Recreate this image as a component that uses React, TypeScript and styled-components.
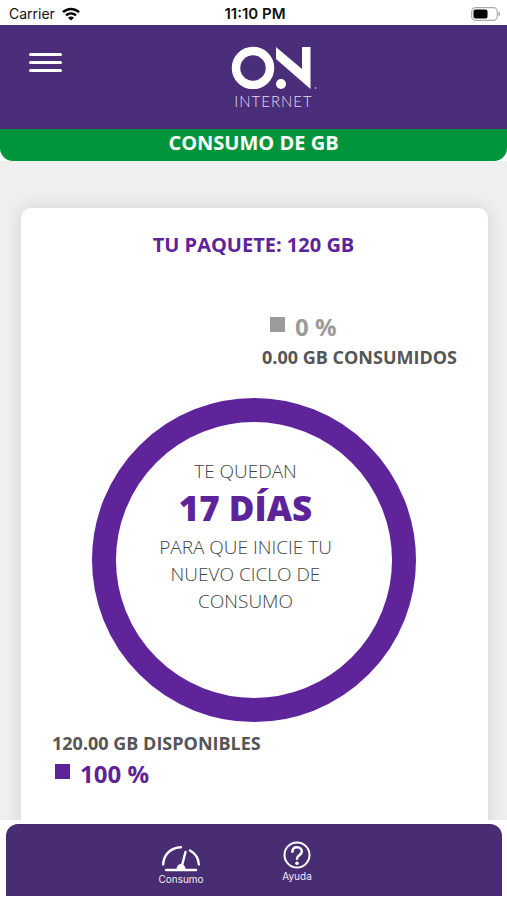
import React from "react";
import styled, { createGlobalStyle } from "styled-components";

const GlobalStyle = createGlobalStyle`
  *, *::before, *::after { box-sizing: border-box; }
  body { margin: 0; background: #fff; font-family: "Open Sans", "Noto Sans", sans-serif; }
  h1, h2, p { margin: 0; }
`;

const Screen = styled.div`
  display: flex;
  flex-direction: column;
  height: 100vh;
  overflow: hidden;
`;

const StatusBar = styled.div`
  flex: none;
  display: grid;
  grid-template-columns: 1fr auto 1fr;
  align-items: center;
  height: 25px;
  padding: 2px 6px 0 9px;
  font-family: Inter, sans-serif;
  font-size: 14px;
  line-height: 20px;
  color: #111;
`;

const Carrier = styled.span`
  display: flex;
  align-items: center;
  gap: 7px;
`;

const Clock = styled.time`
  font-size: 15px;
  font-weight: 600;
`;

const BatteryIcon = styled.svg`
  justify-self: end;
`;

const Header = styled.header`
  flex: none;
  display: grid;
  grid-template-columns: 1fr auto 1fr;
  height: 104px;
  padding: 0 29px;
  background: #4b2e79;
`;

const MenuButton = styled.button`
  justify-self: start;
  align-self: start;
  display: flex;
  flex-direction: column;
  gap: 5px;
  width: 33px;
  margin-top: 28px;
  padding: 0;
  border: 0;
  background: none;
  cursor: pointer;
`;

const MenuLine = styled.span`
  height: 3px;
  border-radius: 2px;
  background: #fff;
`;

const Brand = styled.a`
  display: flex;
  flex-direction: column;
  align-items: center;
  width: 86px;
  margin-left: 40px;
  padding-top: 20px;
  color: #fff;
  text-decoration: none;
`;

const BrandName = styled.span`
  font-family: Lato, sans-serif;
  font-size: 15px;
  font-weight: 300;
  line-height: 24px;
  letter-spacing: 1px;
  color: #e4dcf0;
`;

const Banner = styled.h1`
  height: 32px;
  border-radius: 0 0 13px 13px;
  background: #00953b;
  color: #fff;
  font-size: 20px;
  font-weight: 700;
  line-height: 28px;
  text-align: center;
`;

const BannerStrip = styled.div`
  flex: none;
  background: #fff;
`;

const Content = styled.main`
  flex: 1;
  min-height: 0;
  overflow: hidden;
  padding: 47px 19px 0 21px;
  background: #efefef;
`;

const Card = styled.section`
  display: flex;
  flex-direction: column;
  padding: 22px 31px 80px;
  border-radius: 10px;
  background: #fff;
  box-shadow: 0 0 18px rgba(0, 0, 0, 0.12);
`;

const PlanTitle = styled.h2`
  padding-right: 2px;
  color: #5d2499;
  font-size: 20px;
  font-weight: 700;
  line-height: 30px;
  text-align: center;
`;

const Usage = styled.div<{ $end?: boolean }>`
  display: flex;
  flex-direction: column;
  align-self: ${(p) => (p.$end ? "flex-end" : "flex-start")};
  margin-top: ${(p) => (p.$end ? "51px" : "6px")};
`;

const Percent = styled.p<{ $color: string; $inset: string }>`
  display: flex;
  align-items: center;
  gap: 10px;
  padding-left: ${(p) => p.$inset};
  color: ${(p) => p.$color};
  font-size: 24px;
  font-weight: 700;
  line-height: 31px;
`;

const Swatch = styled.span`
  width: 15px;
  height: 15px;
  margin-bottom: 5px;
  background: currentColor;
`;

const Amount = styled.p`
  color: #555;
  font-size: 18px;
  font-weight: 700;
  line-height: 30px;
`;

const Gauge = styled.div`
  display: grid;
  align-self: center;
  width: 80%;
  max-width: 324px;
  margin: 26px 2px 0 0;
  > * { grid-area: 1 / 1; }
`;

const Remaining = styled.div`
  display: flex;
  flex-direction: column;
  align-items: center;
  width: 190px;
  margin: 60px 0 0 59px;
  color: #444;
  font-size: 19px;
  font-weight: 300;
  line-height: 27px;
  text-align: center;
`;

const Days = styled.strong`
  padding: 2px 0 5px;
  color: #5d2499;
  font-size: 35px;
  font-weight: 800;
  line-height: 42px;
`;

const TabBar = styled.nav`
  flex: none;
  display: flex;
  justify-content: center;
  gap: 56px;
  height: 72px;
  margin: 4px 5px 4px 6px;
  padding: 17px 30px 0 0;
  border-radius: 12px 12px 0 0;
  background: #482d73;
`;

const Tab = styled.a<{ $low?: boolean }>`
  display: flex;
  flex-direction: column;
  align-items: center;
  width: 60px;
  padding-top: ${(p) => (p.$low ? "5px" : "0")};
  color: #f1eaf8;
  font-family: Inter, sans-serif;
  font-size: 10px;
  line-height: 14px;
  text-decoration: none;
`;

function WifiIcon() {
  return (
    <svg width="18" height="14" viewBox="0 0 18 14" fill="none" stroke="#000" strokeWidth="2.5" aria-hidden="true">
      <path d="M1 5.2C5.6.8 12.4.8 17 5.2" />
      <path d="M4 8.4C6.9 5.7 11.1 5.7 14 8.4" />
      <path d="M9 13.6 6 10.7C7.7 9.1 10.3 9.1 12 10.7Z" fill="#000" stroke="none" />
    </svg>
  );
}

function Logo() {
  return (
    <svg width="86" height="44" viewBox="0 0 86 44" fill="#fff" aria-hidden="true">
      <circle cx="22" cy="23" r="17" fill="none" stroke="#fff" strokeWidth="8.5" />
      <circle cx="50" cy="39" r="5" />
      <path d="M45 2 71 24V2H79.5v42L45 14Z" />
      <circle cx="84.5" cy="43" r="0.7" />
    </svg>
  );
}

function SpeedIcon() {
  return (
    <svg width="38" height="26" viewBox="0 0 38 26" fill="none" stroke="#fff" strokeWidth="2.4" strokeLinecap="round" aria-hidden="true">
      <path d="M1.2 18.5C1.5 8.5 9 1.5 19 1.2" />
      <path d="M28 4.5C33.5 7.5 36.5 12.5 36.8 18.5" />
      <path d="M4 24H34" />
      <path d="M23.5 6 20 19.5" />
      <path d="M14.5 24c0-3.5 1.8-6 4.5-6s4.5 2.5 4.5 6Z" fill="#fff" stroke="none" />
    </svg>
  );
}

function HelpIcon() {
  return (
    <svg width="28" height="28" viewBox="0 0 28 28" fill="none" stroke="#fff" strokeLinecap="round" aria-hidden="true">
      <circle cx="14" cy="14" r="12.5" strokeWidth="2" />
      <path d="M9.4 10.8C9.4 8 11.3 6.2 14 6.2s4.8 1.8 4.8 4.4c0 3.8-4.8 3.3-4.8 7.2" strokeWidth="2.5" />
      <circle cx="14" cy="22.2" r="1.8" fill="#fff" stroke="none" />
    </svg>
  );
}

export default function App() {
  return (
    <Screen>
      <GlobalStyle />
      <StatusBar>
        <Carrier>
          Carrier
          <WifiIcon />
        </Carrier>
        <Clock>11:10 PM</Clock>
        <BatteryIcon width="30" height="14" viewBox="0 0 30 14" role="img" aria-label="Batería">
          <rect x="0.7" y="0.7" width="25.6" height="12.6" rx="3.8" fill="#fff" stroke="#aaa" strokeWidth="1.2" />
          <rect x="2.5" y="2.5" width="14" height="9" rx="2" />
          <path d="M27.5 4.5v5c2.2-1 2.2-4 0-5Z" fill="#aaa" />
        </BatteryIcon>
      </StatusBar>
      <Header>
        <MenuButton type="button" aria-label="Menú">
          <MenuLine />
          <MenuLine />
          <MenuLine />
        </MenuButton>
        <Brand href="#inicio">
          <Logo />
          <BrandName>INTERNET</BrandName>
        </Brand>
      </Header>
      <BannerStrip>
        <Banner>CONSUMO DE GB</Banner>
      </BannerStrip>
      <Content>
        <Card>
          <PlanTitle>TU PAQUETE: 120 GB</PlanTitle>
          <Usage $end>
            <Percent $color="#9b9b9b" $inset="8px"><Swatch />0 %</Percent>
            <Amount>0.00 GB CONSUMIDOS</Amount>
          </Usage>
          <Gauge>
            <svg viewBox="0 0 324 324" role="img" aria-label="100 % disponible">
              <circle cx="162" cy="162" r="150" fill="none" stroke="#5f249a" strokeWidth="24" />
            </svg>
            <Remaining>
              <p>TE QUEDAN</p>
              <Days>17 DÍAS</Days>
              <p>PARA QUE INICIE TU NUEVO CICLO DE CONSUMO</p>
            </Remaining>
          </Gauge>
          <Usage>
            <Amount>120.00 GB DISPONIBLES</Amount>
            <Percent $color="#5d2499" $inset="3px"><Swatch />100 %</Percent>
          </Usage>
        </Card>
      </Content>
      <TabBar>
        <Tab href="#consumo" $low>
          <SpeedIcon />
          Consumo
        </Tab>
        <Tab href="#ayuda">
          <HelpIcon />
          Ayuda
        </Tab>
      </TabBar>
    </Screen>
  );
}
